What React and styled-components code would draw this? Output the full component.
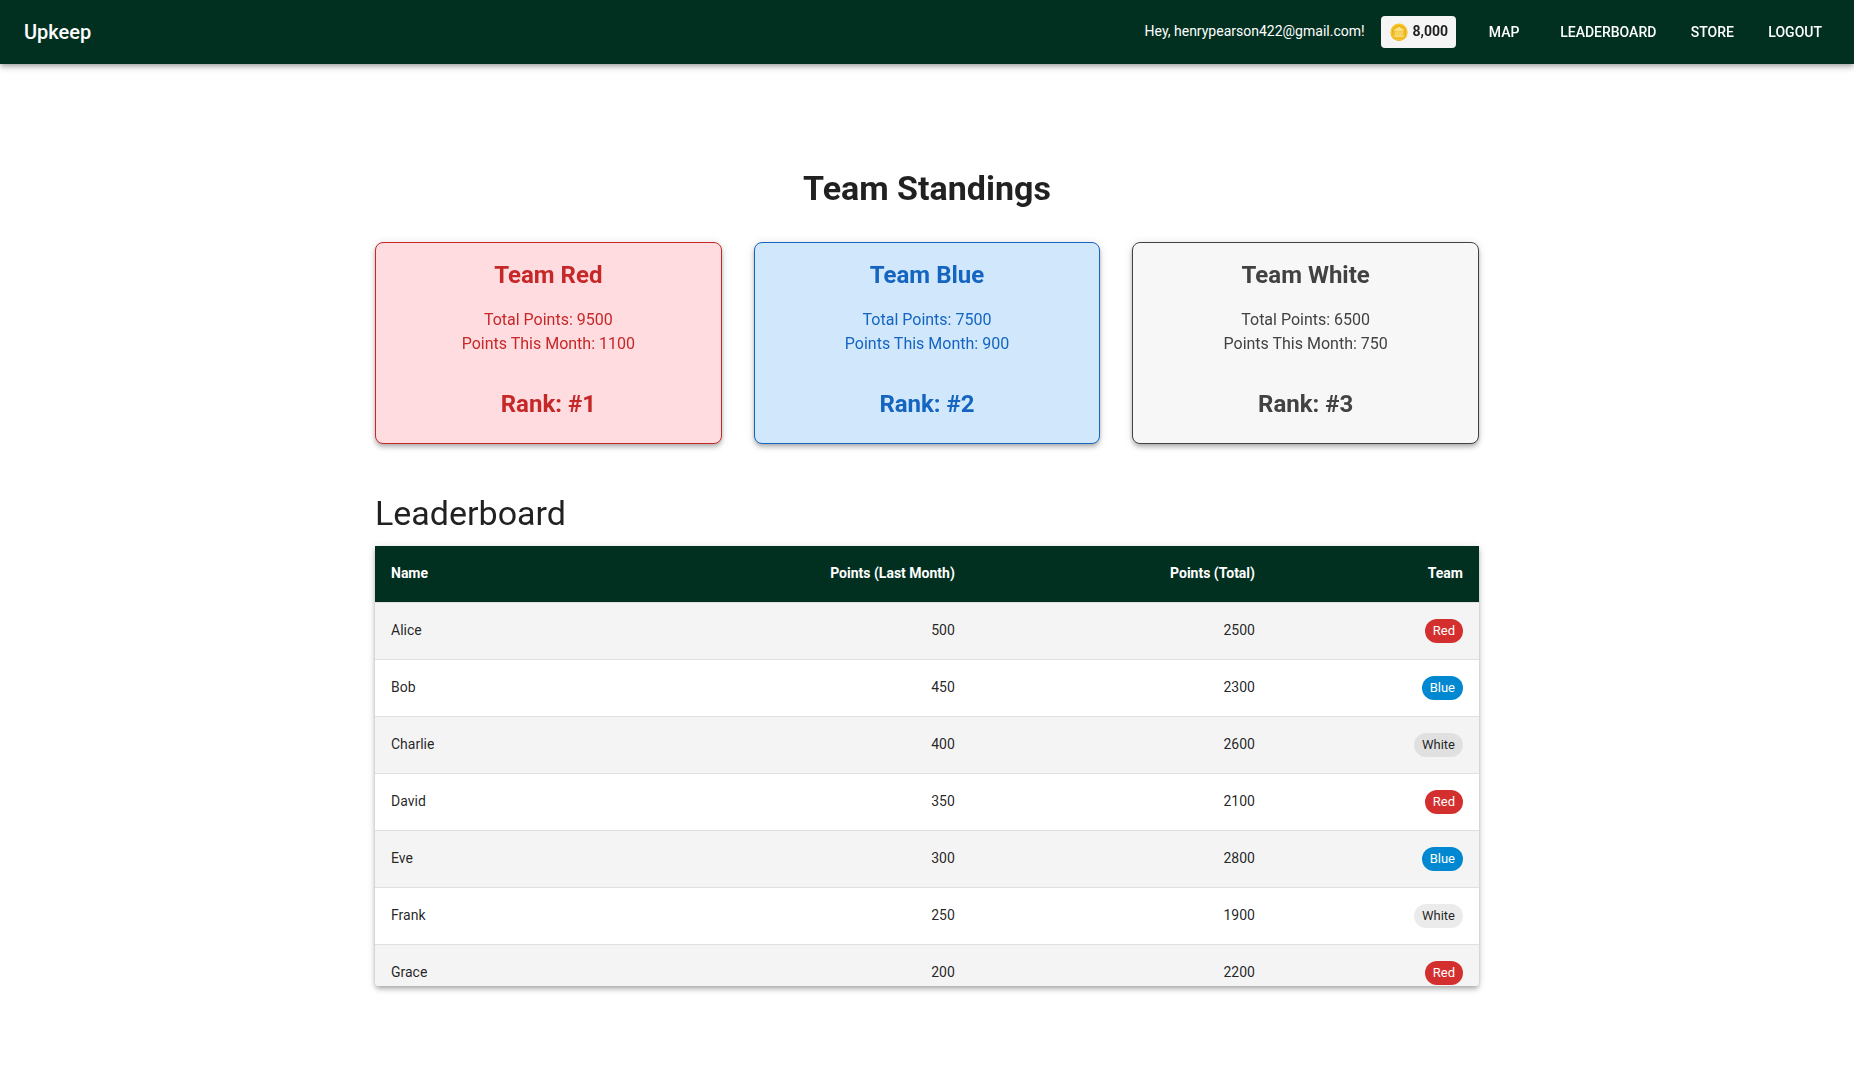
import React from "react";
import styled, { createGlobalStyle } from "styled-components";

const GlobalStyle = createGlobalStyle`
  *, *::before, *::after { box-sizing: border-box; }
  body {
    margin: 0;
    background: #fff;
    color: rgba(0, 0, 0, 0.87);
    font-family: Roboto, "Liberation Sans", sans-serif;
    font-size: 16px;
    line-height: 24px;
    -webkit-font-smoothing: antialiased;
  }
`;

const raised = `0 2px 4px -1px rgba(0, 0, 0, 0.2), 0 4px 5px 0 rgba(0, 0, 0, 0.14),
    0 1px 10px 0 rgba(0, 0, 0, 0.12)`;

const AppBar = styled.header`
  display: flex;
  align-items: center;
  justify-content: space-between;
  height: 64px;
  padding: 0 24px;
  background: #023020;
  color: #fff;
  box-shadow: ${raised};
`;

const Brand = styled.a`
  color: inherit;
  text-decoration: none;
  font-size: 20px;
  font-weight: 500;
  line-height: 32px;
`;

const Actions = styled.div`
  display: flex;
  align-items: center;
  gap: 16px;
`;

const Greeting = styled.span`
  padding-bottom: 2px;
  font-size: 14px;
  line-height: 20px;
`;

const Balance = styled.div`
  display: flex;
  align-items: center;
  gap: 4px;
  height: 32px;
  padding: 0 8px;
  border-radius: 4px;
  background: #f5f5f5;
  color: rgba(0, 0, 0, 0.87);
  font-size: 14px;
  font-weight: 700;
`;

const Amount = styled.span`
  padding-bottom: 2px;
  line-height: 20px;
`;

const Nav = styled.nav`
  display: flex;
  gap: 16px;
`;

const NavButton = styled.button`
  min-width: 64px;
  padding: 6px 8px;
  border: 0;
  border-radius: 4px;
  background: transparent;
  color: inherit;
  font: inherit;
  font-size: 14px;
  font-weight: 500;
  text-transform: uppercase;
  cursor: pointer;
`;

const Page = styled.main`
  max-width: 1152px;
  margin: 0 auto;
  padding: 103px 24px 96px;
`;

const Title = styled.h1`
  margin: 0 0 33px;
  font-size: 34px;
  font-weight: 700;
  line-height: 42px;
  text-align: center;
`;

const Standings = styled.section`
  display: grid;
  grid-template-columns: repeat(3, 1fr);
  gap: 32px;
  margin-bottom: 48px;
`;

const themes = {
  Red: { color: "#c62828", background: "#ffdce0", chip: "#d32f2f", chipText: "#fff" },
  Blue: { color: "#1565c0", background: "#d0e7fc", chip: "#0288d1", chipText: "#fff" },
  White: {
    color: "#424242",
    background: "#f7f7f7",
    chip: "rgba(0, 0, 0, 0.08)",
    chipText: "rgba(0, 0, 0, 0.87)",
  },
};

const TeamCard = styled.article`
  padding: 16px 16px 23px;
  border: 1px solid ${(p) => themes[p.$team].color};
  border-radius: 8px;
  background: ${(p) => themes[p.$team].background};
  color: ${(p) => themes[p.$team].color};
  text-align: center;
  box-shadow: ${raised};
`;

const TeamName = styled.h2`
  margin: 0 0 17px;
  font-size: 24px;
  font-weight: 700;
  line-height: 32px;
`;

const Stat = styled.p`
  margin: 0;
`;

const Rank = styled.p`
  margin: 32px 0 0;
  font-size: 24px;
  font-weight: 700;
  line-height: 32px;
`;

const SectionTitle = styled.h2`
  margin: 0 0 12px;
  font-size: 34px;
  font-weight: 400;
  line-height: 42px;
`;

const TableBox = styled.div`
  max-height: 440px;
  overflow: auto;
  scrollbar-width: none;
  border-radius: 0 0 4px 4px;
  background: #fff;
  box-shadow: ${raised};
`;

const Table = styled.table`
  width: 100%;
  border-collapse: separate;
  border-spacing: 0;
  font-size: 14px;
`;

const HeadCell = styled.th`
  position: sticky;
  top: 0;
  padding: 15px 16px 17px;
  border-bottom: 1px solid #e0e0e0;
  background: #023020;
  color: #fff;
  font-weight: 700;
  text-align: ${(p) => p.$align || "left"};
`;

const Row = styled.tr`
  &:nth-of-type(odd) {
    background: #f4f4f4;
  }
`;

const Cell = styled.td`
  height: 57px;
  padding: 0 16px 2px;
  border-bottom: 1px solid #e0e0e0;
  text-align: ${(p) => p.$align || "left"};
`;

const Chip = styled.span`
  display: inline-flex;
  align-items: center;
  height: 24px;
  padding: 0 8px;
  border-radius: 12px;
  background: ${(p) => themes[p.$team].chip};
  color: ${(p) => themes[p.$team].chipText};
  font-size: 13px;
  vertical-align: middle;
`;

const CoinIcon = () => (
  <svg width="20" height="18" viewBox="0 0 20 18" aria-hidden="true">
    <circle cx="10" cy="9.4" r="8.5" fill="#e0a416" />
    <circle cx="10" cy="9" r="8.4" fill="#fac92a" />
    <circle cx="10" cy="9.3" r="7" fill="#e3a71a" />
    <circle cx="10" cy="9.6" r="6.5" fill="#f0bd28" />
    <path d="M10 4 14.6 6.8v1H5.4v-1z" fill="#fde58c" />
    <path d="M6.4 8.2h1.1v4H6.4zM8.4 8.2h1.1v4H8.4zM10.5 8.2h1.1v4h-1.1zM12.5 8.2h1.1v4h-1.1z" fill="#fde58c" />
    <path d="M5.4 12.5h9.2v1.3H5.4z" fill="#fde58c" />
  </svg>
);

const navItems = ["Map", "Leaderboard", "Store", "Logout"];

const teams = [
  { name: "Red", total: 9500, month: 1100, rank: 1 },
  { name: "Blue", total: 7500, month: 900, rank: 2 },
  { name: "White", total: 6500, month: 750, rank: 3 },
];

const players = [
  { name: "Alice", month: 500, total: 2500, team: "Red" },
  { name: "Bob", month: 450, total: 2300, team: "Blue" },
  { name: "Charlie", month: 400, total: 2600, team: "White" },
  { name: "David", month: 350, total: 2100, team: "Red" },
  { name: "Eve", month: 300, total: 2800, team: "Blue" },
  { name: "Frank", month: 250, total: 1900, team: "White" },
  { name: "Grace", month: 200, total: 2200, team: "Red" },
];

export default function App() {
  return (
    <>
      <GlobalStyle />
      <AppBar>
        <Brand href="#">Upkeep</Brand>
        <Actions>
          <Greeting>Hey, henrypearson422@gmail.com!</Greeting>
          <Balance>
            <CoinIcon />
            <Amount>8,000</Amount>
          </Balance>
          <Nav>
            {navItems.map((item) => (
              <NavButton key={item} type="button">
                {item}
              </NavButton>
            ))}
          </Nav>
        </Actions>
      </AppBar>
      <Page>
        <Title>Team Standings</Title>
        <Standings>
          {teams.map((team) => (
            <TeamCard key={team.name} $team={team.name}>
              <TeamName>Team {team.name}</TeamName>
              <Stat>Total Points: {team.total}</Stat>
              <Stat>Points This Month: {team.month}</Stat>
              <Rank>Rank: #{team.rank}</Rank>
            </TeamCard>
          ))}
        </Standings>
        <SectionTitle>Leaderboard</SectionTitle>
        <TableBox>
          <Table>
            <thead>
              <tr>
                <HeadCell scope="col">Name</HeadCell>
                <HeadCell scope="col" $align="right">Points (Last Month)</HeadCell>
                <HeadCell scope="col" $align="right">Points (Total)</HeadCell>
                <HeadCell scope="col" $align="right">Team</HeadCell>
              </tr>
            </thead>
            <tbody>
              {players.map((player) => (
                <Row key={player.name}>
                  <Cell>{player.name}</Cell>
                  <Cell $align="right">{player.month}</Cell>
                  <Cell $align="right">{player.total}</Cell>
                  <Cell $align="right">
                    <Chip $team={player.team}>{player.team}</Chip>
                  </Cell>
                </Row>
              ))}
            </tbody>
          </Table>
        </TableBox>
      </Page>
    </>
  );
}
